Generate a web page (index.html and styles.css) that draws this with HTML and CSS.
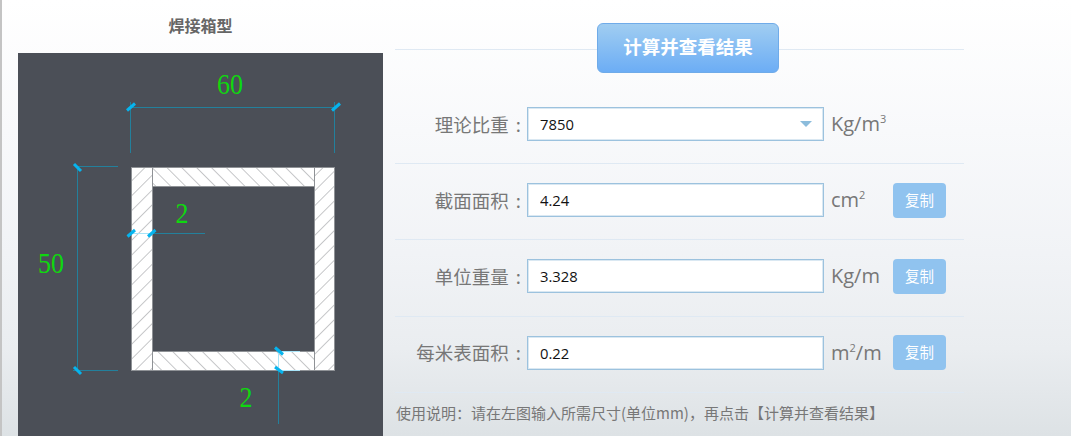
FILE: index.html
```html
<!DOCTYPE html>
<html lang="zh">
<head>
<meta charset="utf-8">
<title>焊接箱型</title>
<link rel="stylesheet" href="styles.css">
</head>
<body>
<main class="page">
  <section class="left">
    <h2 class="title">焊接箱型</h2>
    <svg class="diagram" viewBox="18 53 365 383" width="365" height="383" xmlns="http://www.w3.org/2000/svg">
      <defs>
        <pattern id="hatchF" width="10.500" height="10.500" patternUnits="userSpaceOnUse" patternTransform="rotate(-45 0 0)">
          <rect width="10.500" height="10.500" fill="#fff"/><line x1="0" y1="0" x2="10.500" y2="0" stroke="#b4b6b8" stroke-width="1.500"/>
        </pattern>
        <pattern id="hatchB" width="10.500" height="10.500" patternUnits="userSpaceOnUse" patternTransform="rotate(45 0 0)">
          <rect width="10.500" height="10.500" fill="#fff"/><line x1="0" y1="0" x2="10.500" y2="0" stroke="#b4b6b8" stroke-width="1.500"/>
        </pattern>
      </defs>
      <g stroke="#8f9296" stroke-width="1">
        <rect x="131.500" y="167.500" width="21" height="203" fill="url(#hatchF)"/>
        <rect x="314.500" y="167.500" width="20" height="203" fill="url(#hatchF)"/>
        <rect x="152.500" y="167.500" width="162" height="19" fill="url(#hatchB)"/>
        <rect x="152.500" y="351.500" width="162" height="19" fill="url(#hatchB)"/>
      </g>
      <g stroke="#23809c" stroke-width="1" fill="none">
        <path d="M131 107.500H334M130.500 102V153M334.500 102V153"/>
        <path d="M77.500 167V370M77 166.500H118M73 370.500H118"/>
        <path d="M152 233.500H205"/>
        <path d="M278.500 370V424"/>
      </g>
      <g stroke="#a8e4f8" stroke-width="1" fill="none">
        <path d="M131 233.500H152"/>
        <path d="M278.500 351V370M279 351.500H300M279 370.500H300"/>
      </g>
      <g stroke="#06b4ee" stroke-width="3" stroke-linecap="butt">
        <path d="M127 110.500L135 103.500M332 110.500L340 103.500"/>
        <path d="M74 164L81 171M74 367L81 374"/>
        <path d="M127.500 236.500L135 230M148 236.500L155.500 230"/>
        <path d="M275 347.500L283 354.500M275 367L283 373"/>
      </g>
      <g class="dim">
        <text x="217" y="94" textLength="26" lengthAdjust="spacingAndGlyphs">60</text>
        <text x="38" y="273" textLength="26" lengthAdjust="spacingAndGlyphs">50</text>
        <text x="175.500" y="223" textLength="13" lengthAdjust="spacingAndGlyphs">2</text>
        <text x="239.500" y="407" textLength="13" lengthAdjust="spacingAndGlyphs">2</text>
      </g>
    </svg>
  </section>
  <section class="right">
    <header class="head">
      <button class="calc" type="button">计算并查看结果</button>
    </header>
    <div class="row row-first">
      <span class="label">理论比重 :</span>
      <div class="select-wrap">
        <select class="field select"><option>7850</option></select>
        <i class="caret"></i>
      </div>
      <span class="unit">Kg/m<sup>3</sup></span>
    </div>
    <div class="row">
      <span class="label">截面面积 :</span>
      <input class="field" value="4.24">
      <span class="unit">cm<sup>2</sup></span>
      <button class="copy" type="button">复制</button>
    </div>
    <div class="row">
      <span class="label">单位重量 :</span>
      <input class="field" value="3.328">
      <span class="unit">Kg/m</span>
      <button class="copy" type="button">复制</button>
    </div>
    <div class="row">
      <span class="label">每米表面积 :</span>
      <input class="field" value="0.22">
      <span class="unit">m<sup>2</sup>/m</span>
      <button class="copy" type="button">复制</button>
    </div>
    <p class="note">使用说明：请在左图输入所需尺寸(单位mm)，再点击【计算并查看结果】</p>
  </section>
</main>
</body>
</html>
```
FILE: styles.css
```css
* { box-sizing: border-box; }
html, body { margin: 0; height: 436px; overflow: hidden; }
body {
  font-family: "Liberation Sans", "Noto Sans CJK SC", sans-serif;
  background: linear-gradient(180deg, #ffffff 0%, #f8f9fb 30%, #f1f3f6 58%, #eaedf0 80%, #dde2e5 100%);
}
.page {
  display: flex;
  height: 436px;
  border-left: 2px solid #c4c4c4;
}
.left {
  width: 381px;
  padding-left: 16px;
  flex: none;
}
.title {
  margin: 0;
  height: 53px;
  padding-top: 16px;
  width: 365px;
  text-align: center;
  font-size: 16px;
  line-height: 22px;
  font-weight: 700;
  color: #666;
}
.diagram { display: block; background: #4b4f57; }
.dim text {
  font-family: "Liberation Serif", serif;
  font-size: 29px;
  fill: #0fd80f;
}
.right {
  width: 569px;
  margin-left: 12px;
  flex: none;
}
.head {
  height: 50px;
  border-bottom: 1px solid #dfe9f3;
  padding: 23px 0 0 202px;
}
.calc {
  display: block;
  width: 182px;
  height: 50px;
  border: 1px solid #6fabe9;
  border-radius: 6px;
  background: linear-gradient(180deg, #a0cdf1 0%, #6cadf5 100%);
  color: #fff;
  font: 700 18.500px/1 "Noto Sans CJK SC", sans-serif;
  padding: 0 0 4px;
}
.row {
  display: flex;
  align-items: center;
  height: 76.250px;
  padding-bottom: 3px;
  border-bottom: 1px solid #dfe9f3;
}
.row-first {
  height: 114px;
  padding-top: 38px;
}
.label {
  width: 132px;
  flex: none;
  padding-right: 6px;
  text-align: right;
  font: 18.500px/1 "Noto Sans CJK SC", sans-serif;
  word-spacing: 3px;
  color: #777;
}
.field {
  display: block;
  width: 297px;
  height: 34px;
  border: 1px solid #9cc2de;
  box-shadow: inset 0 0 0 1px rgba(162, 197, 223, .4);
  background: #fff;
  padding: 0 12px;
  font: 14.800px "Open Sans", "Liberation Sans", sans-serif;
  color: #111;
  outline: none;
  border-radius: 0;
  flex: none;
}
.select-wrap { position: relative; flex: none; }
.select { appearance: none; -webkit-appearance: none; }
.caret {
  position: absolute;
  right: 12px;
  top: 14px;
  width: 0;
  height: 0;
  border-left: 6px solid transparent;
  border-right: 6px solid transparent;
  border-top: 6px solid #8cbcdc;
}
.unit {
  width: 69px;
  flex: none;
  padding-left: 7px;
  font: 20px/1 "Open Sans", "Liberation Sans", sans-serif;
  color: #777;
}
.unit sup { font-size: 11px; line-height: 0; vertical-align: 8px; }
.copy {
  width: 53px;
  height: 35px;
  border: 0;
  border-radius: 4px;
  background: #90c3ef;
  color: #fff;
  font: 14.500px/1 "Noto Sans CJK SC", sans-serif;
  padding: 0;
}
.note {
  margin: 10px 0 0 1px;
  font: 15px/20px "Noto Sans CJK SC", sans-serif;
  color: #777;
  white-space: nowrap;
}
```
